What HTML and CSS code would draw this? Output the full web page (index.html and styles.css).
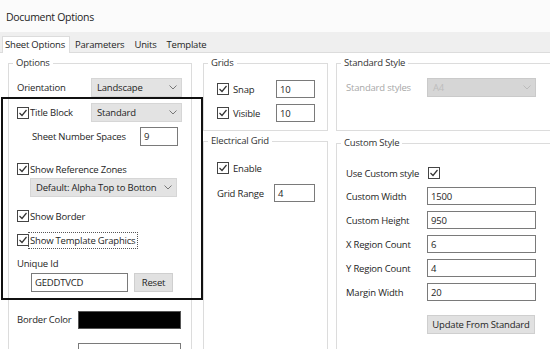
FILE: index.html
```html
<!DOCTYPE html>
<html lang="en">
<head>
    <meta charset="UTF-8">
    <title>Document Options</title>
    <link rel="stylesheet" href="styles.css">
</head>
<body>
    <div class="dialog">
        <div class="title">Document Options</div>

        <!-- Zakladki -->
        <div class="tabs">
            <span class="tab active">Sheet Options</span>
            <span class="tab">Parameters</span>
            <span class="tab">Units</span>
            <span class="tab">Template</span>
        </div>

        <div class="content">
            <!-- Lewa kolumna -->
            <div class="col col-left">
                <fieldset class="group grow">
                    <legend>Options</legend>
                    <div class="body body-options">
                        <div class="row mt8">
                            <span class="lbl w74">Orientation</span>
                            <span class="select w91">Landscape<svg class="chev" width="8" height="5" viewBox="0 0 8 5"><polyline points="0.5,0.5 4,4 7.5,0.5" fill="none" stroke="#777" stroke-width="1"/></svg></span>
                        </div>
                        <div class="row mt6">
                            <span class="check w74"><span class="box"><svg width="10" height="10" viewBox="0 0 10 10"><polyline points="1.5,5 4,7.5 8.5,2" fill="none" stroke="#333" stroke-width="1.2"/></svg></span>Title Block</span>
                            <span class="select w91">Standard<svg class="chev" width="8" height="5" viewBox="0 0 8 5"><polyline points="0.5,0.5 4,4 7.5,0.5" fill="none" stroke="#777" stroke-width="1"/></svg></span>
                        </div>
                        <div class="row mt5 indent15">
                            <span class="lbl w108">Sheet Number Spaces</span>
                            <span class="input w38">9</span>
                        </div>
                        <div class="row crow mt15">
                            <span class="check"><span class="box"><svg width="10" height="10" viewBox="0 0 10 10"><polyline points="1.5,5 4,7.5 8.5,2" fill="none" stroke="#333" stroke-width="1.2"/></svg></span>Show Reference Zones</span>
                        </div>
                        <div class="row mt1 indent13">
                            <span class="select w147">Default: Alpha Top to Botton<svg class="chev" width="8" height="5" viewBox="0 0 8 5"><polyline points="0.5,0.5 4,4 7.5,0.5" fill="none" stroke="#777" stroke-width="1"/></svg></span>
                        </div>
                        <div class="row crow mt11">
                            <span class="check"><span class="box"><svg width="10" height="10" viewBox="0 0 10 10"><polyline points="1.5,5 4,7.5 8.5,2" fill="none" stroke="#333" stroke-width="1.2"/></svg></span>Show Border</span>
                        </div>
                        <div class="row crow mt8">
                            <span class="check"><span class="box"><svg width="10" height="10" viewBox="0 0 10 10"><polyline points="1.5,5 4,7.5 8.5,2" fill="none" stroke="#333" stroke-width="1.2"/></svg></span><span class="focus">Show Template Graphics</span></span>
                        </div>
                        <div class="row crow mt7">
                            <span class="lbl">Unique Id</span>
                        </div>
                        <div class="row mt2 indent14">
                            <span class="input w97">GEDDTVCD</span>
                            <span class="button w39 ml6">Reset</span>
                        </div>
                        <div class="row mt18">
                            <span class="lbl w61">Border Color</span>
                            <span class="swatch w103"></span>
                        </div>
                        <div class="row mt14">
                            <span class="lbl w61">Sheet Color</span>
                            <span class="input w103"></span>
                        </div>
                    </div>
                </fieldset>
            </div>

            <!-- Srodkowa kolumna -->
            <div class="col col-mid">
                <fieldset class="group top-group">
                    <legend>Grids</legend>
                    <div class="body body-grid">
                        <div class="row row18 mt10">
                            <span class="check w59"><span class="box"><svg width="10" height="10" viewBox="0 0 10 10"><polyline points="1.5,5 4,7.5 8.5,2" fill="none" stroke="#333" stroke-width="1.2"/></svg></span><span class="gap">Snap</span></span>
                            <span class="input w39">10</span>
                        </div>
                        <div class="row row18 mt6">
                            <span class="check w59"><span class="box"><svg width="10" height="10" viewBox="0 0 10 10"><polyline points="1.5,5 4,7.5 8.5,2" fill="none" stroke="#333" stroke-width="1.2"/></svg></span><span class="gap">Visible</span></span>
                            <span class="input w39">10</span>
                        </div>
                    </div>
                </fieldset>
                <fieldset class="group grow mt3">
                    <legend>Electrical Grid</legend>
                    <div class="body body-grid">
                        <div class="row crow mt12">
                            <span class="check"><span class="box"><svg width="10" height="10" viewBox="0 0 10 10"><polyline points="1.5,5 4,7.5 8.5,2" fill="none" stroke="#333" stroke-width="1.2"/></svg></span><span class="gap">Enable</span></span>
                        </div>
                        <div class="row row18 mt8">
                            <span class="lbl w57">Grid Range</span>
                            <span class="input w41">4</span>
                        </div>
                    </div>
                </fieldset>
            </div>

            <!-- Prawa kolumna -->
            <div class="col col-right">
                <fieldset class="group top-group">
                    <legend>Standard Style</legend>
                    <div class="body body-style">
                        <div class="row mt8">
                            <span class="lbl w81 disabled">Standard styles</span>
                            <span class="select w109 off">A4<svg class="chev" width="8" height="5" viewBox="0 0 8 5"><polyline points="0.5,0.5 4,4 7.5,0.5" fill="none" stroke="#bbb" stroke-width="1"/></svg></span>
                        </div>
                    </div>
                </fieldset>
                <fieldset class="group grow mt5">
                    <legend>Custom Style</legend>
                    <div class="body body-style">
                        <div class="row crow mt15">
                            <span class="lbl w82">Use Custom style</span>
                            <span class="box"><svg width="10" height="10" viewBox="0 0 10 10"><polyline points="1.5,5 4,7.5 8.5,2" fill="none" stroke="#333" stroke-width="1.2"/></svg></span>
                        </div>
                        <div class="row row18 mt6">
                            <span class="lbl w81">Custom Width</span>
                            <span class="input w109">1500</span>
                        </div>
                        <div class="row row18 mt6">
                            <span class="lbl w81">Custom Height</span>
                            <span class="input w109">950</span>
                        </div>
                        <div class="row row18 mt6">
                            <span class="lbl w81">X Region Count</span>
                            <span class="input w109">6</span>
                        </div>
                        <div class="row row18 mt6">
                            <span class="lbl w81">Y Region Count</span>
                            <span class="input w109">4</span>
                        </div>
                        <div class="row row18 mt6">
                            <span class="lbl w81">Margin Width</span>
                            <span class="input w109">20</span>
                        </div>
                        <div class="row mt14">
                            <span class="button w108 ml81">Update From Standard</span>
                        </div>
                    </div>
                </fieldset>
            </div>
        </div>

        <!-- Czarna ramka zaznaczenia -->
        <div class="highlight"></div>
    </div>
</body>
</html>
```

FILE: styles.css
```css
/* Styl ogolny */
body {
    margin: 0;
    font-family: "Open Sans", "Noto Sans", sans-serif;
    font-size: 9.5px;
    letter-spacing: -0.2px;
    color: #1e1e1e;
    background: #fff;
    overflow: hidden;
}

.dialog {
    position: relative;
    width: 550px;
    height: 349px;
    overflow: hidden;
}

.title {
    height: 32px;
    line-height: 34px;
    padding-left: 6px;
    font-size: 10.5px;
    letter-spacing: -0.3px;
    background: #fbfbfb;
}

/* Zakladki */
.tabs {
    height: 21px;
    box-sizing: border-box;
    display: flex;
    align-items: flex-end;
    padding-left: 2px;
    background: #efefef;
    border-bottom: 1px solid #dcdcdc;
}

.tab {
    height: 15px;
    line-height: 15px;
    padding: 0 5px;
}

.tab.active {
    background: #fff;
    border: 1px solid #dcdcdc;
    border-bottom: none;
    padding: 0 4px 1px 2px;
    margin-bottom: -1px;
}

/* Kolumny */
.content {
    display: flex;
    padding: 3px 0 0 8px;
    height: 310px;
}

.col {
    display: flex;
    flex-direction: column;
    flex-shrink: 0;
}

.col-left { width: 184px; }
.col-mid { width: 125px; margin-left: 11px; }
.col-right { width: 230px; margin-left: 8px; }

/* Grupy */
.group {
    margin: 0;
    padding: 0;
    min-width: 0;
    border: 1px solid #dcdcdc;
}

.group legend {
    margin-left: 4px;
    padding: 0 3px;
    line-height: 14px;
    color: #333;
}

.grow { flex: 1; }

.top-group {
    height: 75px;
    box-sizing: border-box;
}

.body-options { padding-left: 8px; }
.body-grid { padding-left: 13px; }
.body-style { padding-left: 9px; }

/* Wiersze */
.row {
    display: flex;
    align-items: center;
    height: 19px;
}

.row18 { height: 18px; }
.crow { height: 16px; }

.mt1 { margin-top: 1px; }
.mt2 { margin-top: 2px; }
.mt3 { margin-top: 3px; }
.mt5 { margin-top: 5px; }
.mt6 { margin-top: 6px; }
.mt7 { margin-top: 7px; }
.mt8 { margin-top: 8px; }
.mt10 { margin-top: 10px; }
.mt11 { margin-top: 11px; }
.mt12 { margin-top: 12px; }
.mt14 { margin-top: 14px; }
.mt15 { margin-top: 15px; }
.mt18 { margin-top: 18px; }

.indent13 { padding-left: 13px; }
.indent14 { padding-left: 14px; }
.indent15 { padding-left: 15px; }
.ml6 { margin-left: 6px; }
.ml81 { margin-left: 81px; }

.w38 { width: 38px; }
.w39 { width: 39px; }
.w41 { width: 41px; }
.w57 { width: 57px; }
.w59 { width: 59px; }
.w61 { width: 61px; }
.w74 { width: 74px; }
.w81 { width: 81px; }
.w82 { width: 82px; }
.w91 { width: 91px; }
.w97 { width: 97px; }
.w103 { width: 103px; }
.w108 { width: 108px; }
.w109 { width: 109px; }
.w147 { width: 147px; }

.lbl {
    flex-shrink: 0;
    white-space: nowrap;
}

.disabled { color: #a8a8a8; }

/* Pola */
.check {
    display: flex;
    align-items: center;
    flex-shrink: 0;
    white-space: nowrap;
}

.box {
    width: 12px;
    height: 12px;
    box-sizing: border-box;
    border: 1px solid #444;
    background: #fff;
    margin-right: 1px;
    display: flex;
    align-items: center;
    justify-content: center;
    flex-shrink: 0;
}

.gap { margin-left: 3px; }

.focus {
    outline: 1px dotted #555;
    outline-offset: 1px;
    padding-right: 1px;
}

.input {
    box-sizing: border-box;
    height: 100%;
    border: 1px solid #7a7a7a;
    background: #fff;
    padding-left: 3px;
    display: flex;
    align-items: center;
    flex-shrink: 0;
}

.select {
    box-sizing: border-box;
    height: 100%;
    background: #e3e3e3;
    border: 1px solid #d6d6d6;
    padding: 0 4px 0 5px;
    display: flex;
    align-items: center;
    justify-content: space-between;
    white-space: nowrap;
    overflow: hidden;
    flex-shrink: 0;
}

.select.off {
    background: #d6d6d6;
    border-color: #cacaca;
    color: #bdbdbd;
}

.chev { flex-shrink: 0; margin-left: 3px; }

.button {
    box-sizing: border-box;
    height: 100%;
    background: #e1e1e1;
    border: 1px solid #cfcfcf;
    display: flex;
    align-items: center;
    justify-content: center;
    white-space: nowrap;
    flex-shrink: 0;
}

.swatch {
    box-sizing: border-box;
    height: 18px;
    background: #000;
    border: 1px solid #555;
}

/* Czarna ramka */
.highlight {
    position: absolute;
    left: 1px;
    top: 97px;
    width: 202px;
    height: 203px;
    box-sizing: border-box;
    border: 2px solid #111;
}
```
